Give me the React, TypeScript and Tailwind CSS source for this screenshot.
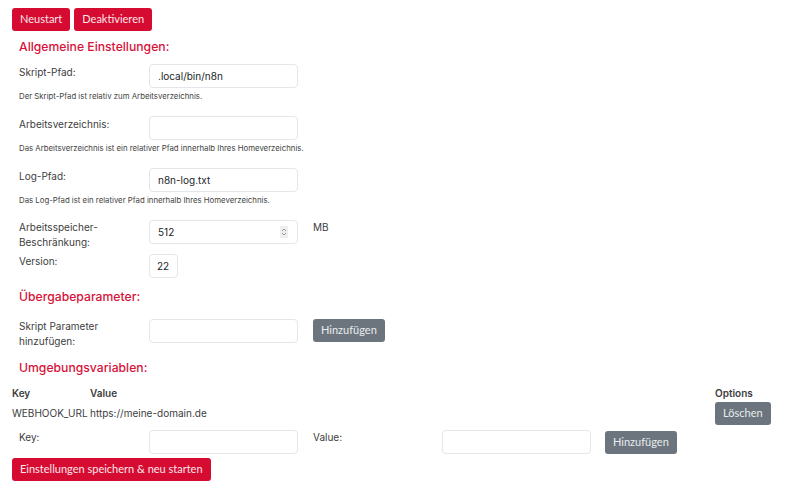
import React from "react";

const Heading: React.FC<{ children: React.ReactNode }> = ({ children }) => (
  <h2 className="pl-[7px] text-[12.2px] leading-[17px] font-medium text-[#d6123a]">{children}</h2>
);

const TextInput: React.FC<{ value?: string; className?: string }> = ({ value = "", className = "w-[149px]" }) => (
  <input
    readOnly
    value={value}
    className={`${className} h-6 rounded-[4px] border border-[#e3e6ea] bg-white px-[8px] text-[10px] text-[#212529] outline-none`}
  />
);

const RedButton: React.FC<{ children: React.ReactNode }> = ({ children }) => (
  <button className="h-[23px] rounded-[3px] bg-[#d50b32] px-[8px] text-[11px] text-[#fde6ea] font-['Lato',sans-serif]">
    {children}
  </button>
);

const GreyButton: React.FC<{ children: React.ReactNode }> = ({ children }) => (
  <button className="h-[23px] rounded-[3px] bg-[#6c757d] px-[8px] text-[11px] text-[#e9ecef] font-['Lato',sans-serif]">
    {children}
  </button>
);

const Help: React.FC<{ children: React.ReactNode }> = ({ children }) => (
  <p className="mt-[3px] pl-[7px] text-[7.8px] leading-[10px] text-[#444]">{children}</p>
);

const App: React.FC = () => {
  return (
    <div className="min-h-[492px] w-[800px] bg-white px-3 pt-2 font-['Inter',sans-serif] text-[10px] text-[#3d3d3d]">
      {/* Top actions */}
      <div className="flex gap-1">
        <RedButton>Neustart</RedButton>
        <RedButton>Deaktivieren</RedButton>
      </div>

      <div className="mt-[7px]">
        <Heading>Allgemeine Einstellungen:</Heading>
      </div>

      {/* Skript-Pfad */}
      <div className="mt-[9px] flex items-start pl-[7px]">
        <label className="w-[130px] pt-[1px] leading-[15px]">Skript-Pfad:</label>
        <TextInput value=".local/bin/n8n" />
      </div>
      <Help>Der Skript-Pfad ist relativ zum Arbeitsverzeichnis.</Help>

      {/* Arbeitsverzeichnis */}
      <div className="mt-[15px] flex items-start pl-[7px]">
        <label className="w-[130px] pt-[1px] leading-[15px]">Arbeitsverzeichnis:</label>
        <TextInput />
      </div>
      <Help>Das Arbeitsverzeichnis ist ein relativer Pfad innerhalb Ihres Homeverzeichnis.</Help>

      {/* Log-Pfad */}
      <div className="mt-[15px] flex items-start pl-[7px]">
        <label className="w-[130px] pt-[1px] leading-[15px]">Log-Pfad:</label>
        <TextInput value="n8n-log.txt" />
      </div>
      <Help>Das Log-Pfad ist ein relativer Pfad innerhalb Ihres Homeverzeichnis.</Help>

      {/* Arbeitsspeicher */}
      <div className="mt-[15px] flex items-start pl-[7px]">
        <label className="w-[130px] leading-[15px]">
          Arbeitsspeicher-
          <br />
          Beschränkung:
        </label>
        <div className="relative">
          <TextInput value="512" />
          <span className="absolute right-[10px] top-[6px] flex h-[12px] w-[8px] items-center justify-center bg-[#eceef0]">
            <svg width="6" height="10" viewBox="0 0 6 10" fill="none" stroke="#8a8f94" strokeWidth="0.9">
              <path d="M1 4 L3 2 L5 4" />
              <path d="M1 6 L3 8 L5 6" />
            </svg>
          </span>
        </div>
        <span className="ml-[15px] leading-[15px]">MB</span>
      </div>

      {/* Version */}
      <div className="mt-[4px] flex items-start pl-[7px]">
        <label className="w-[130px] leading-[15px]">Version:</label>
        <input
          readOnly
          value="22"
          className="h-6 w-[29px] rounded-[4px] border border-[#e3e6ea] bg-white px-[7px] text-[10px] text-[#212529] outline-none"
        />
      </div>

      <div className="mt-[10px]">
        <Heading>Übergabeparameter:</Heading>
      </div>

      {/* Skript Parameter */}
      <div className="mt-[14px] flex items-start pl-[7px]">
        <label className="w-[130px] leading-[15px]">
          Skript Parameter
          <br />
          hinzufügen:
        </label>
        <TextInput />
        <div className="ml-[15px]">
          <GreyButton>Hinzufügen</GreyButton>
        </div>
      </div>

      <div className="mt-[10px]">
        <Heading>Umgebungsvariablen:</Heading>
      </div>

      {/* Env table */}
      <table className="mt-[10px] w-full table-fixed border-collapse text-left">
        <thead>
          <tr className="h-[15px]">
            <th className="w-[78px] p-0 font-semibold leading-[15px]">Key</th>
            <th className="p-0 font-semibold leading-[15px]">Value</th>
            <th className="w-[73px] p-0 font-semibold leading-[15px]">Options</th>
          </tr>
        </thead>
        <tbody>
          <tr className="h-[24px]">
            <td className="whitespace-nowrap p-0">WEBHOOK_URL</td>
            <td className="p-0">https://meine-domain.de</td>
            <td className="p-0">
              <GreyButton>Löschen</GreyButton>
            </td>
          </tr>
        </tbody>
      </table>

      {/* New env */}
      <div className="mt-[5px] flex items-start pl-[7px]">
        <label className="w-[130px] leading-[15px]">Key:</label>
        <TextInput />
        <label className="ml-[15px] w-[129px] leading-[15px]">Value:</label>
        <TextInput />
        <div className="ml-[14px] pt-[1px]">
          <GreyButton>Hinzufügen</GreyButton>
        </div>
      </div>

      <div className="mt-[4px]">
        <RedButton>Einstellungen speichern &amp; neu starten</RedButton>
      </div>
    </div>
  );
};

export default App;
